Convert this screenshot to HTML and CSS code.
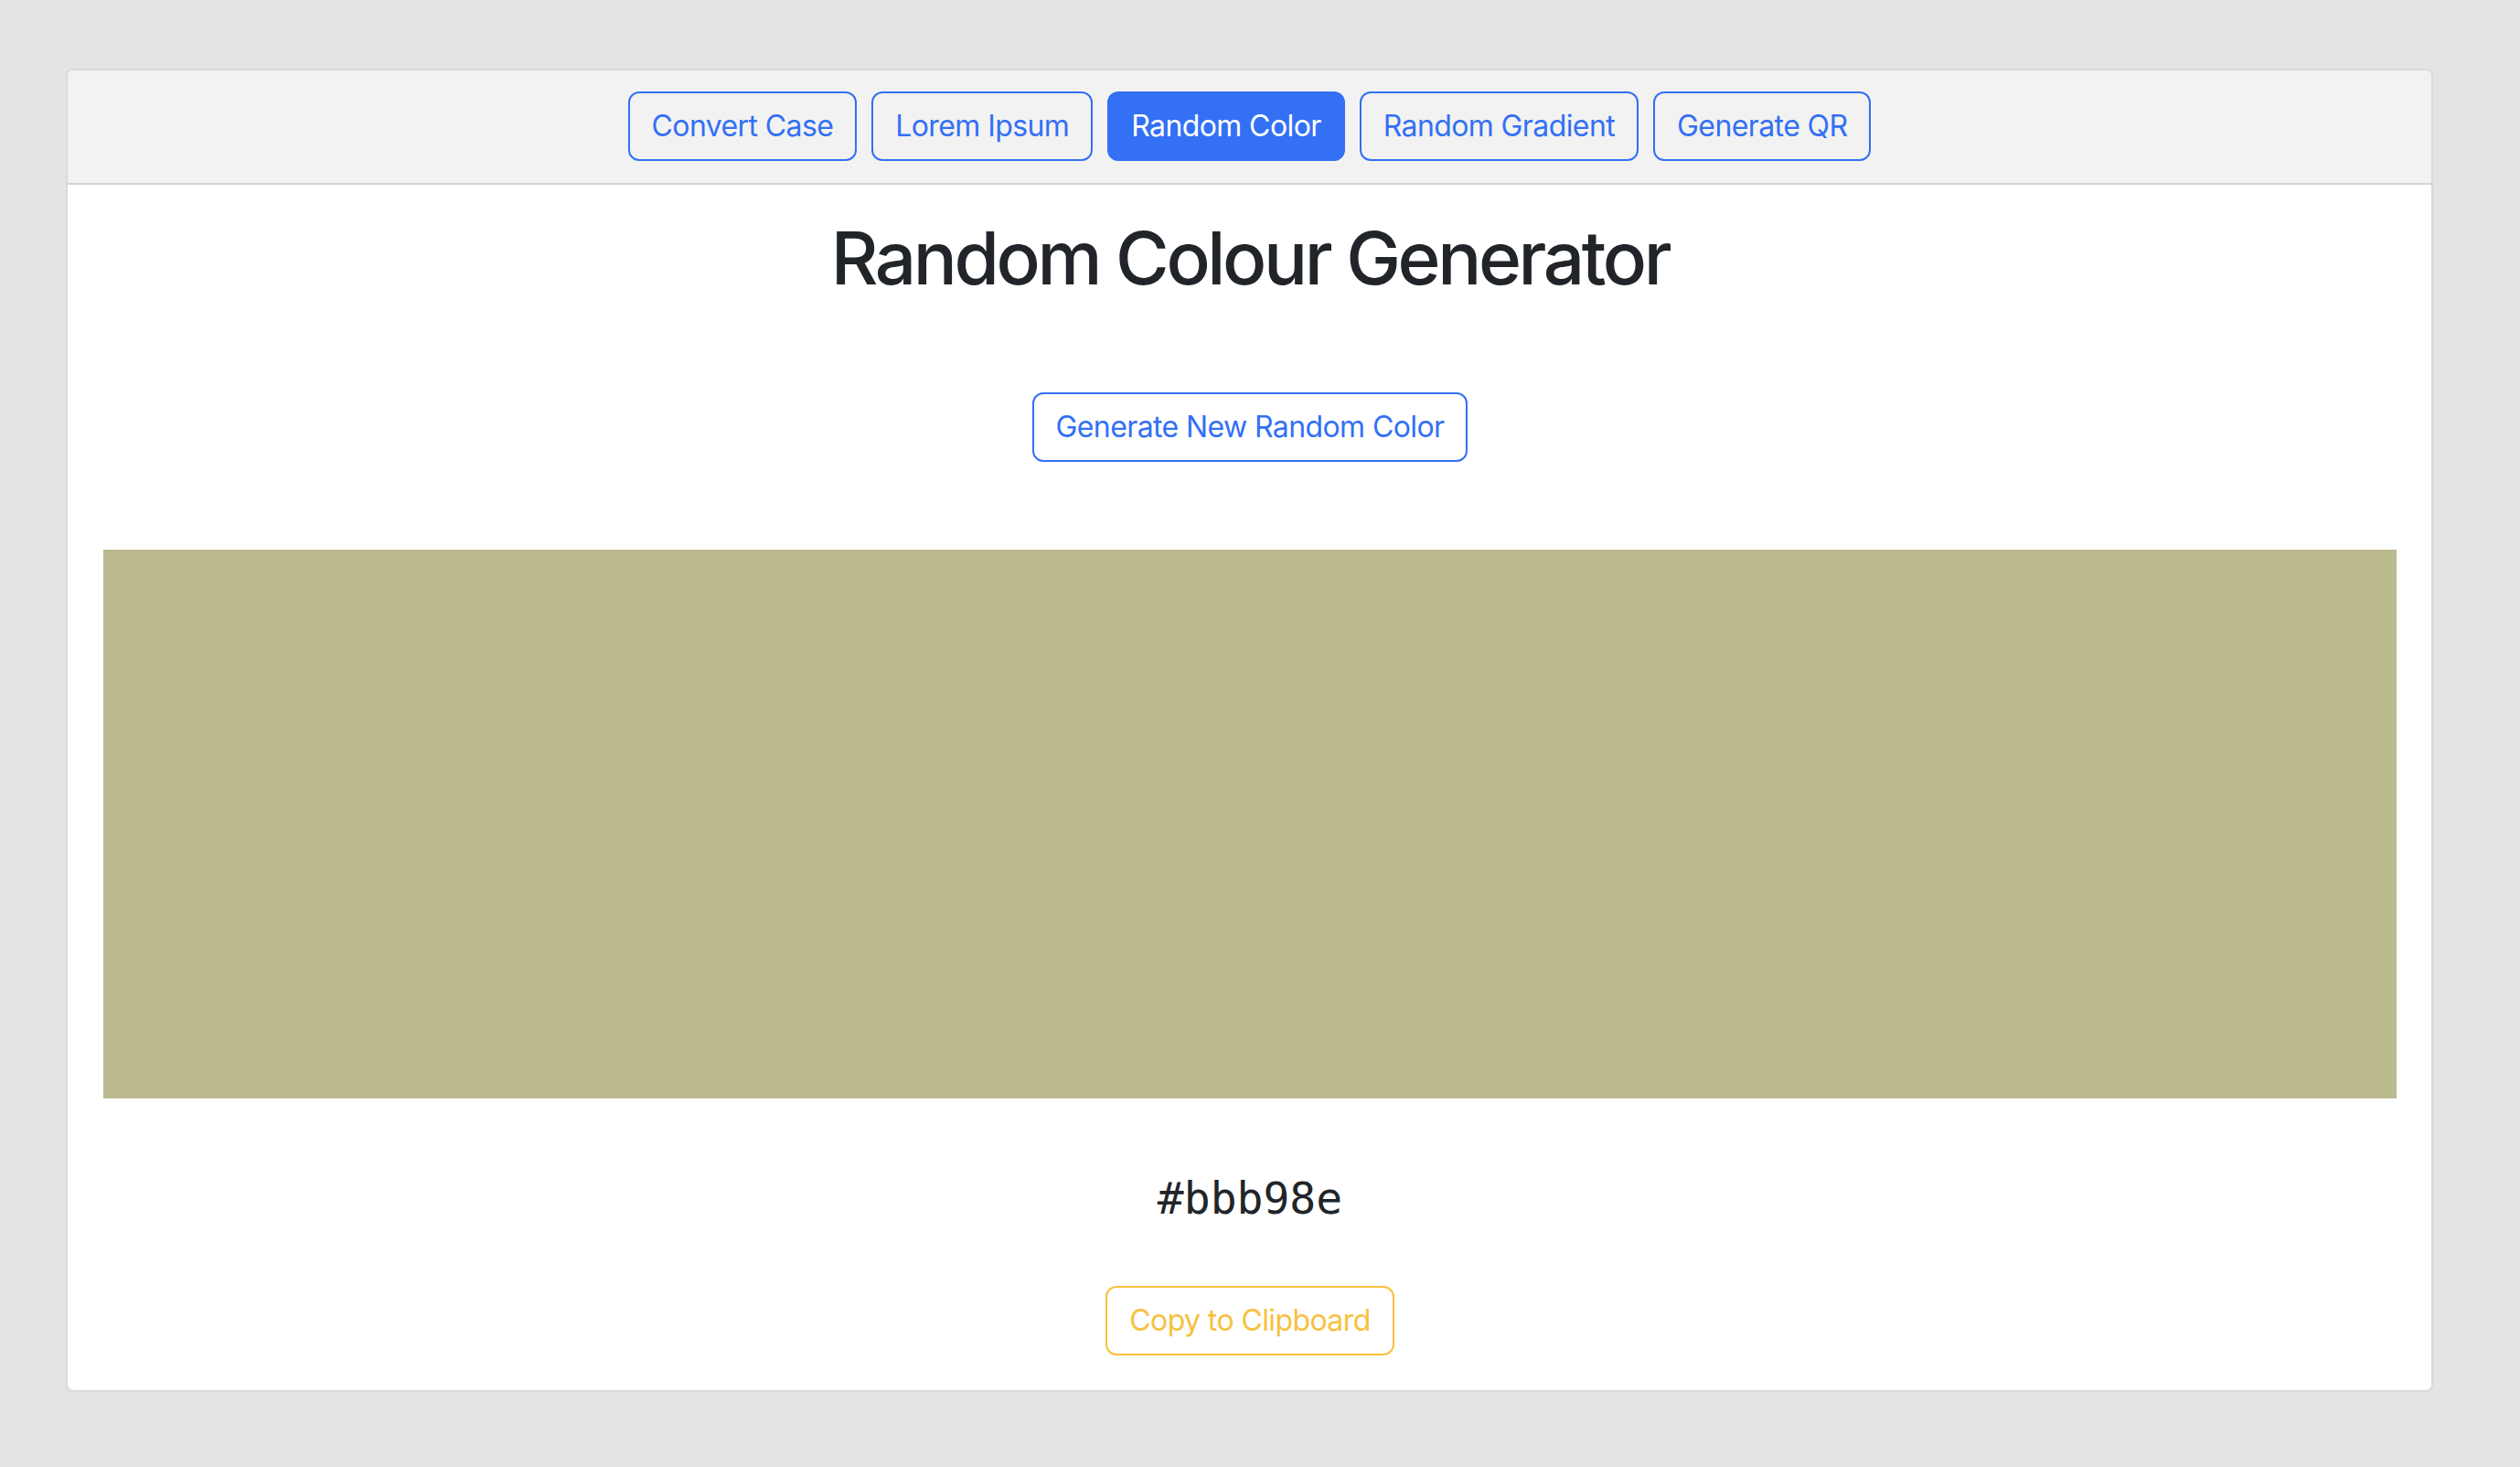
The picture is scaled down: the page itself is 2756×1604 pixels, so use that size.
FILE: index.html
```html
<!DOCTYPE html>
<html lang="en">
<head>
<meta charset="utf-8">
<title>Random Colour Generator</title>
<link rel="stylesheet" href="styles.css">
</head>
<body>
<div class="page">
  <div class="card">
    <div class="card-header">
      <nav class="tabs">
        <a class="btn btn-outline-primary" href="#">Convert Case</a>
        <a class="btn btn-outline-primary" href="#">Lorem Ipsum</a>
        <a class="btn btn-primary" href="#">Random Color</a>
        <a class="btn btn-outline-primary" href="#">Random Gradient</a>
        <a class="btn btn-outline-primary" href="#">Generate QR</a>
      </nav>
    </div>
    <div class="card-body">
      <h1 class="title">Random Colour Generator</h1>
      <div class="action-row">
        <button class="btn btn-outline-primary" type="button">Generate New Random Color</button>
      </div>
      <div class="swatch" style="background-color: #bbb98e;"></div>
      <div class="hex">#bbb98e</div>
      <div class="copy-row">
        <button class="btn btn-outline-warning" type="button">Copy to Clipboard</button>
      </div>
    </div>
  </div>
</div>
</body>
</html>
```

FILE: styles.css
```css
html, body {
  margin: 0;
  padding: 0;
}

body {
  background: #e4e4e2;
  font-family: Inter, "Noto Sans", "Liberation Sans", sans-serif;
  color: #212529;
  min-height: 1604px;
}

.page {
  padding: 75px 95px 0 72px;
}

.card {
  background: #ffffff;
  border: 2px solid #d9d9d8;
  border-radius: 8px;
  overflow: hidden;
}

.card-header {
  background: #f2f2f2;
  border-bottom: 2px solid #d4d4d4;
  padding: 23px 0 24px;
}

.tabs {
  display: flex;
  justify-content: center;
  gap: 16px;
}

.btn {
  display: inline-block;
  box-sizing: border-box;
  height: 76px;
  padding: 12px 24px;
  border: 2px solid transparent;
  border-radius: 12px;
  font-family: Inter, "Noto Sans", "Liberation Sans", sans-serif;
  font-size: 32px;
  line-height: 48px;
  letter-spacing: -0.6px;
  text-decoration: none;
  background: transparent;
  cursor: pointer;
  white-space: nowrap;
}

.btn-outline-primary {
  color: #3370f4;
  border-color: #3370f4;
}

.btn-primary {
  color: #ffffff;
  background: #3370f4;
  border-color: #3370f4;
}

.btn-outline-warning {
  color: #f7c13e;
  border-color: #f7c13e;
}

.card-body {
  padding: 32px 38px 38px 39px;
}

.title {
  margin: 0 0 99px;
  font-size: 80px;
  line-height: 96px;
  font-weight: 500;
  text-align: center;
  letter-spacing: -3.4px;
}

.action-row {
  display: flex;
  justify-content: center;
  margin-bottom: 96px;
}

.swatch {
  height: 600px;
}

.hex {
  margin-top: 80px;
  font-family: "DejaVu Sans Mono", "Liberation Mono", monospace;
  font-size: 48px;
  line-height: 58px;
  text-align: center;
  color: #212529;
}

.copy-row {
  display: flex;
  justify-content: center;
  margin-top: 67px;
}
```
